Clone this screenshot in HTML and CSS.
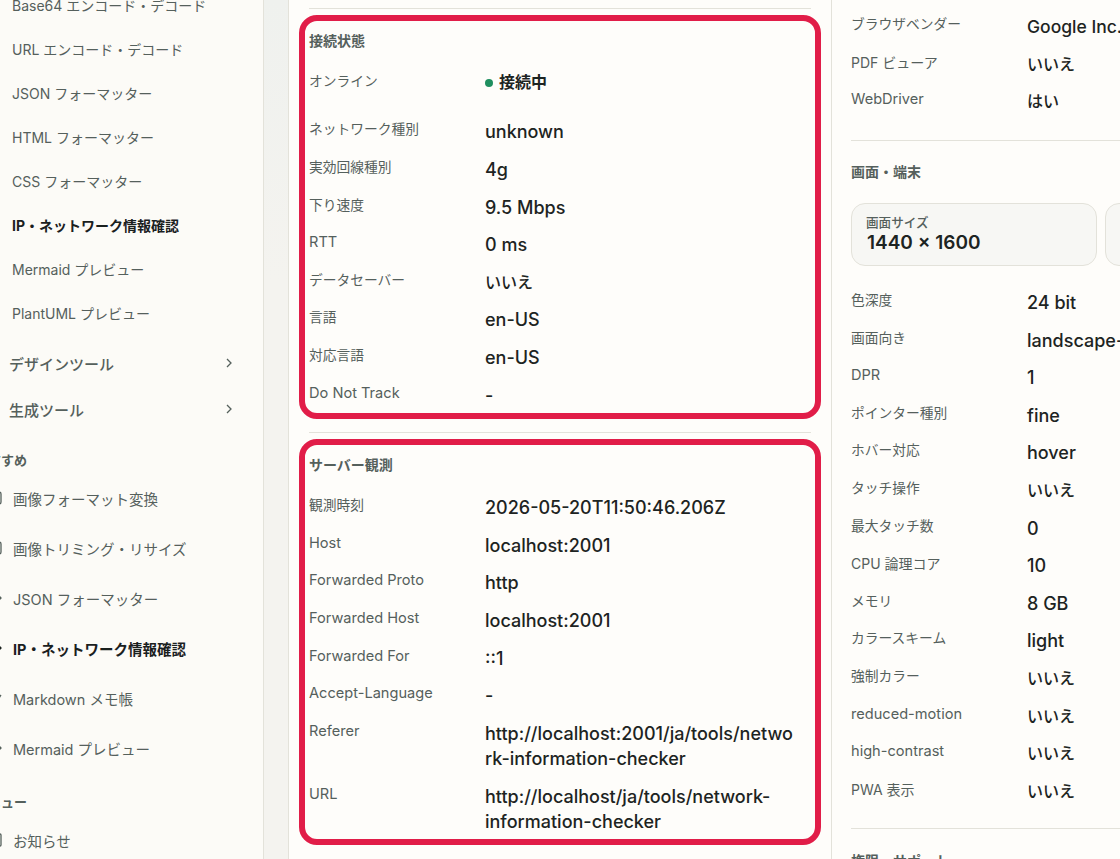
FILE: index.html
```html
<!DOCTYPE html>
<html lang="ja">
<head>
<meta charset="utf-8">
<title>IP・ネットワーク情報確認</title>
<link rel="stylesheet" href="styles.css">
</head>
<body>
<div class="app">
  <aside class="sidebar">
    <nav class="side-inner">
      <a class="sub">Base64 エンコード・デコード</a>
      <a class="sub">URL エンコード・デコード</a>
      <a class="sub">JSON フォーマッター</a>
      <a class="sub">HTML フォーマッター</a>
      <a class="sub">CSS フォーマッター</a>
      <a class="sub active">IP・ネットワーク情報確認</a>
      <a class="sub">Mermaid プレビュー</a>
      <a class="sub">PlantUML プレビュー</a>
      <a class="group">デザインツール<svg class="chev" viewBox="0 0 10 10"><path d="M3 1l4 4-4 4"/></svg></a>
      <a class="group">生成ツール<svg class="chev" viewBox="0 0 10 10"><path d="M3 1l4 4-4 4"/></svg></a>
      <div class="side-label">おすすめ</div>
      <a class="rec"><svg class="ico" viewBox="0 0 16 16"><rect x="2" y="2" width="12" height="12" rx="2"/></svg>画像フォーマット変換</a>
      <a class="rec"><svg class="ico" viewBox="0 0 16 16"><rect x="2" y="2" width="12" height="12" rx="2"/></svg>画像トリミング・リサイズ</a>
      <a class="rec"><svg class="ico" viewBox="0 0 16 16"><path d="M11 5l3 3-3 3"/></svg>JSON フォーマッター</a>
      <a class="rec active"><svg class="ico" viewBox="0 0 16 16"><path d="M11 5l3 3-3 3"/></svg>IP・ネットワーク情報確認</a>
      <a class="rec"><svg class="ico" viewBox="0 0 16 16"><path d="M9 12l5-7"/></svg>Markdown メモ帳</a>
      <a class="rec"><svg class="ico" viewBox="0 0 16 16"><path d="M11 5l3 3-3 3"/></svg>Mermaid プレビュー</a>
      <div class="side-label">メニュー</div>
      <a class="rec"><svg class="ico" viewBox="0 0 16 16"><rect x="2" y="2" width="12" height="12" rx="1"/></svg>お知らせ</a>
    </nav>
  </aside>
  <main class="card">
    <div class="col left">
      <hr class="rule">
      <section class="mark one">
        <h2>接続状態</h2>
        <dl class="rows">
          <dt class="online">オンライン</dt><dd class="ja status"><i class="dot"></i>接続中</dd>
          <dt>ネットワーク種別</dt><dd>unknown</dd>
          <dt>実効回線種別</dt><dd>4g</dd>
          <dt>下り速度</dt><dd>9.5 Mbps</dd>
          <dt class="en">RTT</dt><dd>0 ms</dd>
          <dt>データセーバー</dt><dd class="ja">いいえ</dd>
          <dt>言語</dt><dd>en-US</dd>
          <dt>対応言語</dt><dd>en-US</dd>
          <dt class="en">Do Not Track</dt><dd>-</dd>
        </dl>
      </section>
      <hr class="rule">
      <section class="mark two">
        <h2>サーバー観測</h2>
        <dl class="rows">
          <dt>観測時刻</dt><dd>2026-05-20T11:50:46.206Z</dd>
          <dt class="en">Host</dt><dd>localhost:2001</dd>
          <dt class="en">Forwarded Proto</dt><dd>http</dd>
          <dt class="en">Forwarded Host</dt><dd>localhost:2001</dd>
          <dt class="en">Forwarded For</dt><dd>::1</dd>
          <dt class="en">Accept-Language</dt><dd>-</dd>
          <dt class="en">Referer</dt><dd>http://localhost:2001/ja/tools/network-information-checker</dd>
          <dt class="en">URL</dt><dd>http://localhost/ja/tools/network-information-checker</dd>
        </dl>
      </section>
    </div>
    <div class="col right">
      <dl class="rows">
        <dt>ブラウザベンダー</dt><dd class="tight">Google Inc.</dd>
        <dt class="mix">PDF ビューア</dt><dd class="ja">いいえ</dd>
        <dt class="en">WebDriver</dt><dd class="ja">はい</dd>
      </dl>
      <hr class="rule wide">
      <h2>画面・端末</h2>
      <div class="chips">
        <div class="chip"><span>画面サイズ</span><strong>1440 × 1600</strong></div>
        <div class="chip"></div>
      </div>
      <dl class="rows">
        <dt>色深度</dt><dd>24 bit</dd>
        <dt>画面向き</dt><dd>landscape-primary</dd>
        <dt class="en">DPR</dt><dd>1</dd>
        <dt>ポインター種別</dt><dd>fine</dd>
        <dt>ホバー対応</dt><dd>hover</dd>
        <dt>タッチ操作</dt><dd class="ja">いいえ</dd>
        <dt>最大タッチ数</dt><dd>0</dd>
        <dt class="mix">CPU 論理コア</dt><dd>10</dd>
        <dt>メモリ</dt><dd>8 GB</dd>
        <dt>カラースキーム</dt><dd>light</dd>
        <dt>強制カラー</dt><dd class="ja">いいえ</dd>
        <dt class="en">reduced-motion</dt><dd class="ja">いいえ</dd>
        <dt class="en">high-contrast</dt><dd class="ja">いいえ</dd>
        <dt class="mix">PWA 表示</dt><dd class="ja">いいえ</dd>
      </dl>
      <hr class="rule wide lower">
      <h2>権限・サポート</h2>
    </div>
  </main>
</div>
</body>
</html>
```
FILE: styles.css
```css
* { box-sizing: border-box; }
html, body { margin: 0; height: 859px; overflow: hidden; }
body {
  background: linear-gradient(#eff1ee, #f4f3ef 280px);
  color: #1d2422;
  font-family: Inter, "Noto Sans CJK JP", sans-serif;
}
.app { display: flex; width: 1120px; height: 859px; overflow: hidden; }

/* sidebar */
.sidebar {
  flex: 0 0 264px;
  height: 859px;
  overflow: hidden;
  background: #fcfbf7;
  border-right: 1px solid #e3e2da;
}
.side-inner { display: flex; flex-direction: column; margin-top: -17px; }
.sub, .rec, .group { display: flex; align-items: center; color: #55605c; font-size: 14px; }
.sub { height: 44px; padding-left: 12px; }
.group { height: 46px; padding-left: 9px; padding-right: 29px; justify-content: space-between; font-size: 15px; font-weight: 500; }
.sub + .group { margin-top: 5px; }
.rec { height: 50px; padding-left: 13px; position: relative; font-size: 14.5px; }
.sub.active { color: #1a201e; font-weight: 700; font-size: 14px; }
.rec.active { color: #1a201e; font-weight: 700; }
.chev { width: 10px; height: 10px; fill: none; stroke: #55605c; stroke-width: 1.3; }
.ico {
  position: absolute; left: -13px; top: 17px;
  width: 16px; height: 16px;
  fill: none; stroke: #55605c; stroke-width: 1.3;
}
.rec.active .ico { stroke: #1a201e; }
.side-label {
  flex: 0 0 21px;
  font-size: 13px;
  font-weight: 700;
  color: #55605c;
  line-height: 21px;
}
.group + .side-label { margin: 18px 0 2px -25px; }
.rec + .side-label { margin: 19px 0 2px -25px; }

/* main card */
.card {
  flex: 0 0 auto;
  width: 900px;
  margin-left: 24px;
  display: flex;
  align-items: flex-start;
  height: 859px;
  background: #fefdfa;
  border-left: 1px solid #e3e2da;
}
.col { flex: 0 0 auto; }
.left { width: 543px; padding: 8px 20px 0; border-right: 1px solid #e3e2da; height: 859px; }
.right { width: 520px; padding: 14px 0 0 19px; }
.rule { border: 0; border-top: 1px solid #e3e2da; margin: 0; }
.mark {
  margin: 6px -10px 13px;
  padding: 9.6px 4px 4px;
  border: 6px solid #e11d48;
  border-radius: 18px;
}
.one { padding-bottom: 4.5px; }
.two { padding-top: 10.6px; margin-bottom: 0; }
h2 { margin: 0; font-size: 14px; line-height: 20.8px; font-weight: 700; color: #55605c; }
.rows {
  display: grid;
  grid-template-columns: 176px 314px;
  row-gap: 12px;
  margin: 19px 0 0;
}
.one .rows { margin-top: 18.5px; }
.right > .rows:first-child { margin-top: 0; }
dt { font-size: 13.75px; line-height: 20.5px; color: #55605c; }
dt.en { font-size: 14.6px; line-height: 21.5px; }
dt.mix { font-size: 14px; line-height: 21px; }
dt.online { padding-top: 1px; }
dd { margin: 0; font-size: 18px; line-height: 25.6px; font-weight: 500; color: #1d2422; overflow-wrap: anywhere; }
dd.ja { font-size: 16px; }
dd.tight { font-size: 17.5px; }
.status { display: flex; align-items: center; gap: 6px; padding-bottom: 12px; box-sizing: content-box; font-weight: 600; }
.dot { width: 8px; height: 8px; border-radius: 50%; background: #1f8f5f; }
.wide { margin-top: 25px; margin-bottom: 21.5px; }
.lower { margin-top: 24px; }
.chips { display: grid; grid-template-columns: 246px 246px; gap: 8px; margin-top: 19.5px; }
.chip {
  height: 63px;
  padding: 10px 14px;
  background: #f7f7f4;
  border: 1px solid #e3e2da;
  border-radius: 14px;
  display: flex; flex-direction: column;
}
.chip span { font-size: 12.6px; line-height: 18px; color: #55605c; font-weight: 500; }
.chip strong { font-size: 19px; line-height: 22px; font-weight: 600; color: #1d2422; padding-left: 1px; }
.chips + .rows { margin-top: 24.5px; }
```
